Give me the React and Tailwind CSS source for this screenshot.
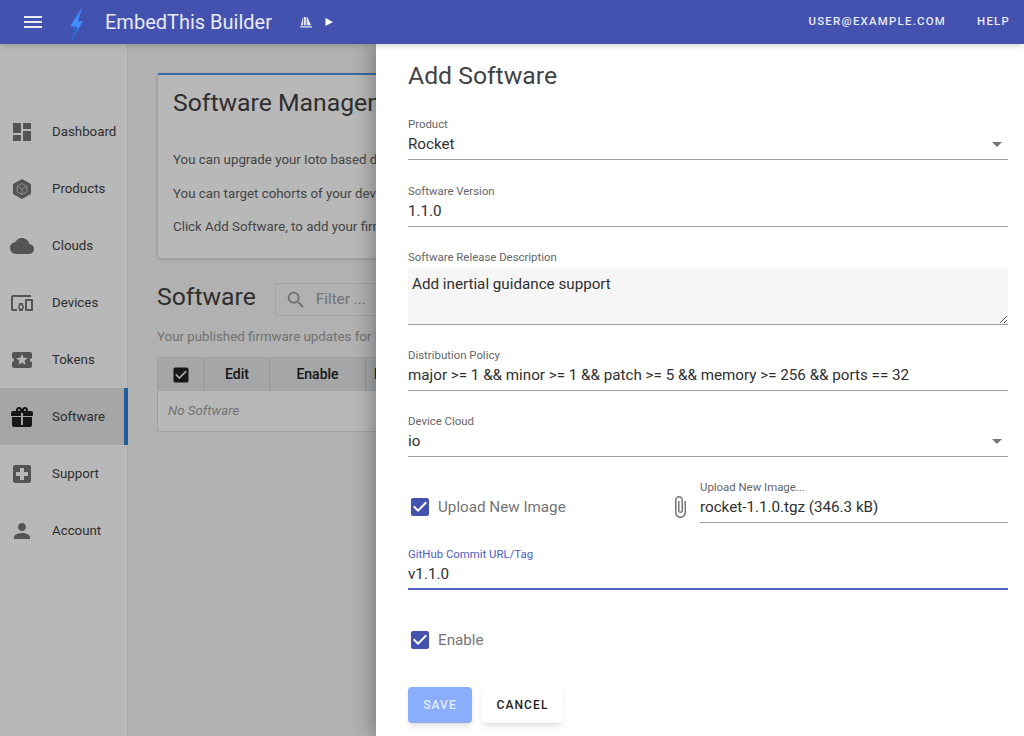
import React from 'react'

const Icon = ({ d, className }) => (
  <svg viewBox="0 0 24 24" className={className} fill="currentColor">
    <path d={d} />
  </svg>
)

const ProductsIcon = ({ className }) => (
  <svg viewBox="0 0 24 24" className={className} fill="none" stroke="currentColor">
    <path d="M12 3 20 7.5V16.5L12 21 4 16.5V7.5Z" fill="currentColor" strokeWidth="2" strokeLinejoin="round" />
    <path d="M12 6.5 16.8 9.2V14.8L12 17.5 7.2 14.8V9.2ZM7.2 9.2 12 12 16.8 9.2M12 12V17.5" stroke="#c4c4c4" strokeWidth="1" strokeLinejoin="round" />
  </svg>
)

const menu = [
  { label: 'Dashboard', d: 'M3 13h8V3H3v10zm0 8h8v-6H3v6zm10 0h8V11h-8v10zm0-18v6h8V3h-8z' },
  { label: 'Products', custom: ProductsIcon },
  { label: 'Clouds', d: 'M19.35 10.04C18.67 6.59 15.64 4 12 4 9.11 4 6.6 5.64 5.35 8.04 2.34 8.36 0 10.91 0 14c0 3.31 2.69 6 6 6h13c2.76 0 5-2.24 5-5 0-2.64-2.05-4.78-4.65-4.96z' },
  { label: 'Devices', d: 'M3 6h18V4H3c-1.1 0-2 .9-2 2v12c0 1.1.9 2 2 2h4v-2H3V6zm10 6H9v1.78c-.61.55-1 1.33-1 2.22s.39 1.67 1 2.22V20h4v-1.78c.61-.55 1-1.34 1-2.22s-.39-1.67-1-2.22V12zm-2 5.5c-.83 0-1.5-.67-1.5-1.5s.67-1.5 1.5-1.5 1.5.67 1.5 1.5-.67 1.5-1.5 1.5zM22 8h-6c-.5 0-1 .5-1 1v10c0 .5.5 1 1 1h6c.5 0 1-.5 1-1V9c0-.5-.5-1-1-1zm-1 10h-4v-8h4v8z' },
  { label: 'Tokens', d: 'M20 12c0-1.1.9-2 2-2V6c0-1.1-.9-2-2-2H4c-1.1 0-1.99.9-1.99 2v4c1.1 0 1.99.9 1.99 2s-.89 2-2 2v4c0 1.1.9 2 2 2h16c1.1 0 2-.9 2-2v-4c-1.1 0-2-.9-2-2zm-4.42 4.8L12 14.5l-3.58 2.3 1.08-4.12-3.29-2.69 4.24-.25L12 5.8l1.54 3.95 4.24.25-3.29 2.69 1.09 4.11z' },
  { label: 'Software', active: true, d: 'M9.06,1.93C7.17,1.92 5.33,3.74 6.17,6H3A2,2 0 0,0 1,8V10A1,1 0 0,0 2,11H11V8H13V11H22A1,1 0 0,0 23,10V8A2,2 0 0,0 21,6H17.83C19,2.73 14.6,0.42 12.57,3.24L12,4L11.43,3.22C10.8,2.33 9.93,1.94 9.06,1.93M9,4C9.89,4 10.34,5.08 9.71,5.71C9.08,6.34 8,5.89 8,5A1,1 0 0,1 9,4M15,4C15.89,4 16.34,5.08 15.71,5.71C15.08,6.34 14,5.89 14,5A1,1 0 0,1 15,4M2,12V20A2,2 0 0,0 4,22H20A2,2 0 0,0 22,20V12H13V20H11V12H2Z' },
  { label: 'Support', d: 'M19 3H5c-1.1 0-1.99.9-1.99 2L3 19c0 1.1.9 2 2 2h14c1.1 0 2-.9 2-2V5c0-1.1-.9-2-2-2zm-1 11h-4v4h-4v-4H6v-4h4V6h4v4h4v4z' },
  { label: 'Account', d: 'M12 12c2.21 0 4-1.79 4-4s-1.79-4-4-4-4 1.79-4 4 1.79 4 4 4zm0 2c-2.67 0-8 1.34-8 4v2h16v-2c0-2.66-5.33-4-8-4z' },
]

const checkPath = 'M19 3H5c-1.11 0-2 .9-2 2v14c0 1.1.89 2 2 2h14c1.11 0 2-.9 2-2V5c0-1.1-.89-2-2-2zm-9 14l-5-5 1.41-1.41L10 14.17l7.59-7.59L19 8l-9 9z'

const Header = () => (
  <div className="relative z-30 flex h-[44px] items-center bg-[#4351af] text-white shadow-md">
    <svg viewBox="0 0 24 24" className="ml-[21px] h-6 w-6" fill="#e8eaf6">
      <path d="M3 18h18v-2H3v2zm0-5h18v-2H3v2zm0-7v2h18V6H3z" />
    </svg>
    <svg viewBox="0 0 16 36" className="ml-[24px] mt-[3px] h-[36px] w-[16px]">
      <path d="M13.5 0.5 1 20.5 6 20.5 2 36 14 15 9 15.5Z" fill="#3f8cff" />
      <path d="M6 20.5 2 36 9 22Z" fill="#2c5fc4" />
    </svg>
    <div className="ml-[20px] text-[20px] text-[#e8eaf6]">EmbedThis Builder</div>
    <svg viewBox="0 0 12 12" className="ml-[28px] h-3 w-3" fill="#e8eaf6">
      <path d="M0.8 9.2 3 1V9.2ZM3.8 9.2V1H5.8V9.2ZM6.6 1 7.2 1 11.2 9.2H6.6ZM0.2 10.2h11.6V11.4H0.2Z" />
    </svg>
    <svg viewBox="0 0 10 10" className="ml-[12px] h-[10px] w-[10px]" fill="#ffffff">
      <path d="M1.5 1 9 5 1.5 9Z" />
    </svg>
    <div className="ml-auto flex items-center gap-[31px] pr-[14px] text-[11.4px] font-medium tracking-[1.25px] text-[#e8eaf6]">
      <span>USER@EXAMPLE.COM</span>
      <span>HELP</span>
    </div>
  </div>
)

const Sidebar = () => (
  <div className="w-[128px] shrink-0 border-r border-[#eeeeee] bg-white pt-[59px]">
    {menu.map((item) => {
      const Custom = item.custom
      return (
        <div
          key={item.label}
          className={`flex h-[57px] items-center pl-[10px] text-[13.3px] text-[#424242] ${item.active ? '-mr-px border-r-4 border-[#2f80d8] bg-[#e6e6e6]' : ''}`}
        >
          {Custom ? (
            <Custom className="h-6 w-6 text-[#757575]" />
          ) : (
            <Icon d={item.d} className={`h-6 w-6 ${item.active ? 'text-[#212121]' : 'text-[#757575]'}`} />
          )}
          <span className="ml-[18px]">{item.label}</span>
        </div>
      )
    })}
  </div>
)

const Main = () => (
  <div className="min-w-[896px] flex-1 whitespace-nowrap bg-[#f5f5f5] pl-[29px] pt-[29px]">
    <div className="h-[186px] w-[800px] rounded-[3px] border border-t-2 border-[#e0e0e0] border-t-[#4f94e8] bg-white pl-[15px] shadow-sm">
      <div className="pt-[12px] text-[24.75px] leading-[32px] text-[#424242]">Software Management</div>
      <div className="mt-[31px] flex flex-col gap-[14.5px] text-[13.3px] leading-[19px] text-[#616161]">
        <div>You can upgrade your Ioto based devices with new firmware.</div>
        <div>You can target cohorts of your devices with policies.</div>
        <div>Click Add Software, to add your firmware image.</div>
      </div>
    </div>
    <div className="mt-[22px] flex items-start">
      <div className="text-[24.75px] leading-[32px] text-[#424242]">Software</div>
      <div className="ml-[19px] mt-[2px] flex h-[33px] w-[300px] items-center border border-[#e0e0e0] pl-[9px] text-[15.2px] text-[#9e9e9e]">
        <svg viewBox="0 0 24 24" className="h-[22px] w-[22px]" fill="currentColor">
          <path d="M15.5 14h-.79l-.28-.27C15.41 12.59 16 11.11 16 9.5 16 5.91 13.09 3 9.5 3S3 5.91 3 9.5 5.91 16 9.5 16c1.61 0 3.09-.59 4.23-1.57l.27.28v.79l5 4.99L20.49 19l-4.99-5zm-6 0C7.01 14 5 11.99 5 9.5S7.01 5 9.5 5 14 7.01 14 9.5 11.99 14 9.5 14z" />
        </svg>
        <span className="ml-[9px]">Filter ...</span>
      </div>
    </div>
    <div className="mt-[13px] text-[13.3px] leading-[16px] text-[#9e9e9e]">Your published firmware updates for Ioto devices.</div>
    <div className="mt-[12px] w-[800px] border border-[#e0e0e0] bg-white">
      <div className="flex h-[33px] items-center bg-[#e3e6e8] text-[14px] font-medium text-[#212121]">
        <div className="flex h-full w-[47px] items-center justify-center border-r border-[#cfd2d4]">
          <Icon d={checkPath} className="h-5 w-5 text-[#212121]" />
        </div>
        <div className="flex h-full w-[65px] items-center justify-center border-r border-[#cfd2d4]">Edit</div>
        <div className="flex h-full w-[96px] items-center justify-center border-r border-[#cfd2d4]">Enable</div>
        <div className="pl-[8px]">Product</div>
      </div>
      <div className="flex h-[40px] items-center pl-[10px] text-[13.3px] italic text-[#9e9e9e]">No Software</div>
    </div>
  </div>
)

const Field = ({ label, value, caret, active, className }) => (
  <div className={className}>
    <div className={`text-[11.4px] leading-[14px] ${active ? 'text-[#5060c4]' : 'text-[#666666]'}`}>{label}</div>
    <div
      className={`flex h-[29px] items-center justify-between text-[15.2px] text-[#303030] ${active ? 'border-b-2 border-[#5060c4]' : 'border-b border-[#9e9e9e] pb-[2px]'}`}
    >
      <span>{value}</span>
      {caret && <span className="mr-[6px] h-0 w-0 border-x-[5px] border-t-[5px] border-x-transparent border-t-[#757575]" />}
    </div>
  </div>
)

const Check = ({ label }) => (
  <div className="flex items-center">
    <Icon d={checkPath} className="h-6 w-6 text-[#4351af]" />
    <span className="ml-[6px] text-[15.2px] text-[#757575]">{label}</span>
  </div>
)

const Drawer = () => (
  <div className="absolute bottom-0 right-0 top-[44px] z-20 w-[648px] bg-white pl-[32px] pr-[16px] pt-[15px] shadow-[-6px_0_16px_rgba(0,0,0,0.25)]">
    <div className="text-[24.75px] leading-[34px] text-[#424242]">Add Software</div>
    <div className="mt-[24px] flex flex-col gap-[23px]">
      <Field label="Product" value="Rocket" caret />
      <Field className="mt-px" label="Software Version" value="1.1.0" />
      <div>
        <div className="text-[11.4px] leading-[14px] text-[#666666]">Software Release Description</div>
        <textarea
          readOnly
          defaultValue="Add inertial guidance support"
          className="mt-[5px] block h-[56px] w-full resize-y border-b border-[#9e9e9e] bg-[#f6f6f6] px-[4px] pt-[3px] text-[15.2px] leading-[24px] text-[#303030] outline-none"
        />
      </div>
      <Field label="Distribution Policy" value="major >= 1 && minor >= 1 && patch >= 5 && memory >= 256 && ports == 32" />
      <Field label="Device Cloud" value="io" caret />
      <div className="flex items-end">
        <div className="w-[260px] pb-[4px]">
          <Check label="Upload New Image" />
        </div>
        <svg viewBox="0 0 24 24" className="mb-[4px] h-6 w-6 text-[#757575]" fill="currentColor">
          <path d="M16.5 6v11.5c0 2.21-1.79 4-4 4s-4-1.79-4-4V5c0-1.38 1.12-2.5 2.5-2.5s2.5 1.12 2.5 2.5v10.5c0 .55-.45 1-1 1s-1-.45-1-1V6H10v9.5c0 1.38 1.12 2.5 2.5 2.5s2.5-1.12 2.5-2.5V5c0-2.21-1.79-4-4-4S7 2.79 7 5v12.5c0 3.04 2.46 5.5 5.5 5.5s5.5-2.46 5.5-5.5V6h-1.5z" />
        </svg>
        <Field className="ml-[8px] flex-1" label="Upload New Image..." value="rocket-1.1.0.tgz (346.3 kB)" />
      </div>
      <Field className="mt-px" label="GitHub Commit URL/Tag" value="v1.1.0" active />
    </div>
    <div className="mt-[38px]">
      <Check label="Enable" />
    </div>
    <div className="mt-[35px] flex gap-[10px] text-[12px] font-medium tracking-[1.1px]">
      <button className="h-[36px] w-[64px] rounded bg-[#8aaefc] text-[#e3ebff] shadow-md">SAVE</button>
      <button className="h-[36px] w-[81px] rounded bg-white text-[#212121] shadow-md">CANCEL</button>
    </div>
  </div>
)

const App = () => {
  return (
    <div className="relative h-[736px] w-[1024px] overflow-hidden font-['Roboto',sans-serif]">
      <Header />
      <div className="flex h-[692px]">
        <Sidebar />
        <Main />
      </div>
      <div className="absolute inset-x-0 bottom-0 top-[44px] z-10 bg-black/[0.28]" />
      <Drawer />
    </div>
  )
}

export default App
